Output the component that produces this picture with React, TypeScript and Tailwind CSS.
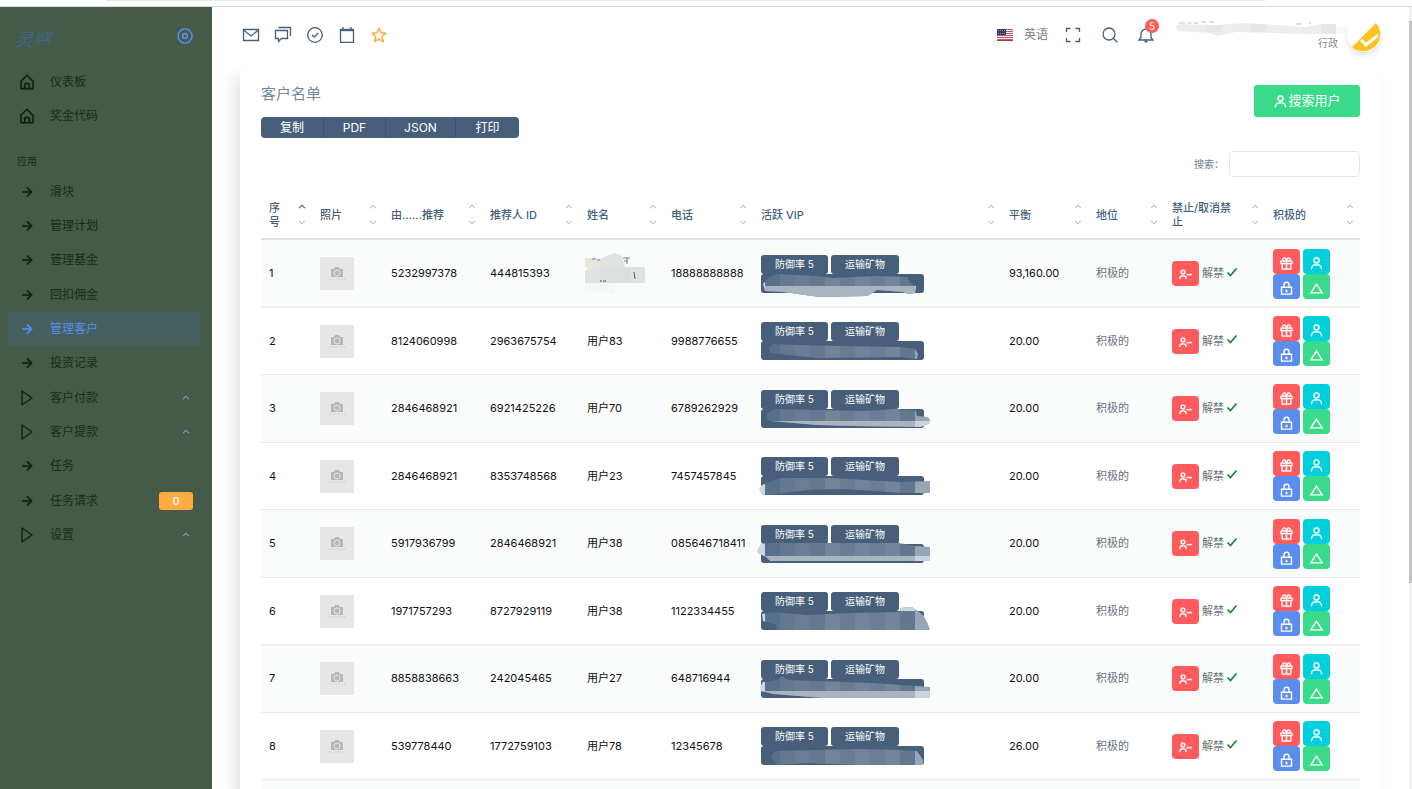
import React from "react";
import {
  BiChevronDown,
  BiChevronUp,
  BiGift,
  BiHomeAlt,
  BiRightArrowAlt,
  BiStar,
  BiUser,
  BiUserMinus,
} from "react-icons/bi";

type MenuItem = {
  label: string;
  icon: "home" | "arrow" | "play";
  active?: boolean;
  sub?: boolean;
  badge?: string;
};

type Customer = {
  id: number;
  referredBy: string;
  referrerId: string;
  name: string;
  phone: string;
  balance: string;
  smudge: string;
  light: number;
};

const mainMenu: MenuItem[] = [
  { label: "仪表板", icon: "home" },
  { label: "奖金代码", icon: "home" },
];

const appMenu: MenuItem[] = [
  { label: "滑块", icon: "arrow" },
  { label: "管理计划", icon: "arrow" },
  { label: "管理基金", icon: "arrow" },
  { label: "回扣佣金", icon: "arrow" },
  { label: "管理客户", icon: "arrow", active: true },
  { label: "投资记录", icon: "arrow" },
  { label: "客户付款", icon: "play", sub: true },
  { label: "客户提款", icon: "play", sub: true },
  { label: "任务", icon: "arrow" },
  { label: "任务请求", icon: "arrow", badge: "0" },
  { label: "设置", icon: "play", sub: true },
];

const columns = [
  { label: "序号", width: "w-[51px]" },
  { label: "照片", width: "w-[71px]" },
  { label: "由......推荐", width: "w-[99px]" },
  { label: "推荐人 ID", width: "w-[97px]" },
  { label: "姓名", width: "w-[84px]" },
  { label: "电话", width: "w-[90px]" },
  { label: "活跃 VIP", width: "w-[248px]" },
  { label: "平衡", width: "w-[87px]" },
  { label: "地位", width: "w-[76px]" },
  { label: "禁止/取消禁止", width: "w-[101px]" },
  { label: "积极的", width: "w-[95px]" },
];

// smudge: outline of the pixelated stroke, light: y where its pale band starts
const customers: Customer[] = [
  {
    id: 1, referredBy: "5232997378", referrerId: "444815393", name: "", phone: "18888888888", balance: "93,160.00",
    smudge: "M13 7 L22 3 L62 5 L78 7 L122 5 L152 6 L155 12 L161 15 L160 22 L153 23 L148 21 L122 19 L112 25 L65 26 L28 21 L10 20 L8 13 Z",
    light: 15,
  },
  {
    id: 2, referredBy: "8124060998", referrerId: "2963675754", name: "用户83", phone: "9988776655", balance: "20.00",
    smudge: "M14 9 L18 6 L45 7 L82 8 L145 9 L160 11 L163 16 L162 21 L145 19 L62 20 L23 16 L15 15 Z",
    light: 30,
  },
  {
    id: 3, referredBy: "2846468921", referrerId: "6921425226", name: "用户70", phone: "6789262929", balance: "20.00",
    smudge: "M12 7 L20 3 L108 5 L142 3 L161 5 L162 10 L173 11 L175 14 L174 18 L165 21 L98 20 L62 19 L15 15 L12 12 Z",
    light: 15,
  },
  {
    id: 4, referredBy: "2846468921", referrerId: "8353748568", name: "用户23", phone: "7457457845", balance: "20.00",
    smudge: "M4 16 L7 12 L25 5 L78 5 L125 8 L145 9 L175 8 L175 20 L145 20 L122 18 L85 16 L52 17 L15 22 L7 22 Z",
    light: 30,
  },
  {
    id: 5, referredBy: "5917936799", referrerId: "2846468921", name: "用户38", phone: "085646718411", balance: "20.00",
    smudge: "M2 9 L6 3 L13 2 L145 2 L160 5 L175 6 L175 20 L15 20 L11 16 L7 14 L3 13 Z",
    light: 15,
  },
  {
    id: 6, referredBy: "1971757293", referrerId: "8727929119", name: "用户38", phone: "1122334455", balance: "20.00",
    smudge: "M7 6 L18 4 L52 7 L95 5 L145 4 L145 0 L157 -1 L168 7 L173 16 L175 22 L22 22 L21 17 L8 13 Z",
    light: 30,
  },
  {
    id: 7, referredBy: "8858838663", referrerId: "242045465", name: "用户27", phone: "648716944", balance: "20.00",
    smudge: "M5 11 L8 6 L22 4 L27 0 L33 4 L118 7 L175 11 L175 22 L68 22 L18 18 L6 15 Z",
    light: 15,
  },
  {
    id: 8, referredBy: "539778440", referrerId: "1772759103", name: "用户78", phone: "12345678", balance: "26.00",
    smudge: "M16 14 L20 8 L102 6 L145 7 L162 8 L168 17 L168 22 L102 22 L52 20 L22 22 Z",
    light: 30,
  },
];

const tiles = [
  "#cfd6dd", "#57708c", "#64788f", "#6a7c96", "#66788f", "#72849a", "#6a7c94",
  "#72849b", "#6b7d97", "#72859b", "#637790", "#98a5b5",
];

// thin line icons on an 18px grid
const LineIcon = ({ d, children }: { d: string; children?: React.ReactNode }) => (
  <svg viewBox="0 0 18 18" className="size-[18px]" fill="none" stroke="currentColor" strokeWidth="1.3">
    <path d={d} />
    {children}
  </svg>
);

const MenuIcon = ({ icon }: { icon: MenuItem["icon"] }) => {
  if (icon === "home") return <BiHomeAlt className="size-[18px]" stroke="currentColor" strokeWidth="0.3" />;
  if (icon === "play")
    return (
      <svg viewBox="0 0 18 18" className="size-[18px]" fill="none" stroke="currentColor" strokeWidth="1.4">
        <path d="M4 2 L14 9 L4 16 Z" strokeLinejoin="round" />
      </svg>
    );
  return <BiRightArrowAlt className="size-[18px]" stroke="currentColor" strokeWidth="0.4" />;
};

const MenuLink = ({ item }: { item: MenuItem }) => (
  <li className="nth-[3n]:mb-px">
    <a
      href="#"
      className={
        item.active
          ? "flex h-[34px] items-center rounded bg-[#446160] pr-[7px] pl-2 text-[#5a8dee]"
          : "flex h-[34px] items-center rounded pr-[7px] pl-2 text-[#15200f]"
      }
    >
      <span className="mr-3 flex w-[22px] justify-center">
        <MenuIcon icon={item.icon} />
      </span>
      <span className={item.active ? "flex-1 text-xs" : "flex-1 text-xs text-[#1c2b1c]"}>{item.label}</span>
      {item.badge && (
        <span className="flex h-[18px] w-[34px] items-center justify-center rounded-[3px] bg-[#fdac41] text-[11px] font-medium text-white">
          {item.badge}
        </span>
      )}
      {item.sub && <BiChevronUp className="size-[14px] text-[#8a99b5]" />}
    </a>
  </li>
);

const Flag = () => (
  <svg viewBox="0 0 16 12" className="h-3 w-4">
    <rect width="16" height="12" fill="#f3eeee" />
    {[0, 2, 4, 6, 8, 10].map((y) => (
      <rect key={y} y={y} width="16" height="1" fill="#c05a63" />
    ))}
    <rect y="11" width="16" height="1" fill="#b9333f" />
    <rect width="9" height="6" fill="#2b3a67" />
    {[1, 3, 5, 7].map((x) => (
      <g key={x} fill="#8e98b8">
        <rect x={x} y="1" width="1" height="1" />
        <rect x={x} y="4" width="1" height="1" />
      </g>
    ))}
  </svg>
);

const Avatar = () => (
  <svg viewBox="0 0 34 34" className="size-[34px] rounded-full bg-white shadow-md">
    <path d="M29 5 A17 17 0 0 1 5 29 Z" fill="#ffc31f" />
    <path d="M14 22 L19 27 L31 17" fill="none" stroke="#fff" strokeWidth="3" />
  </svg>
);

const Photo = () => (
  <svg viewBox="0 0 34 33" className="block h-[33px] w-[34px]">
    <rect width="34" height="33" fill="#e6e6e6" />
    <path d="M11 12 H14 L15 10 H19 L20 12 H23 V20 H11 Z" fill="#b4b8b8" />
    <circle cx="17" cy="16" r="3" fill="#b4b8b8" stroke="#e6e6e6" />
    <path d="M9 22 H26" stroke="#cfcfcf" strokeDasharray="2 1" />
  </svg>
);

const NameSmudge = () => (
  <svg viewBox="0 0 60 42" className="-ml-0.5 block h-[42px] w-[60px]">
    <path d="M0 5 L15 6 L24 2 L30 0 L37 3 L40 14 H60 V30 H0 V18 L4 16 L0 13 Z" fill="#e1e3e2" />
    <path d="M0 5 L15 6 L15 17 L4 17 L0 13 Z" fill="#e5e6dd" />
    <path d="M15 15 H45 V30 H15 Z" fill="#dddee2" />
    <path d="M0 30 H30 V41 L0 38 Z" fill="#f5f6f6" />
    <path d="M7 6 h4 M12 7 h3 M38 5 h7 M39 8 h4 M42 5 v6" stroke="#70819a" />
    <path d="M15 28 h2 M18 28 h3 M49 19 l1 7" stroke="#4b5a6e" />
  </svg>
);

const Smudge = ({ customer }: { customer: Customer }) => {
  const clip = `smudge-${customer.id}`;
  return (
    <svg viewBox="0 0 176 28" className="absolute top-4 -left-1.5 h-7 w-44 overflow-visible">
      <clipPath id={clip}>
        <path d={customer.smudge} />
      </clipPath>
      <g clipPath={`url(#${clip})`}>
        {tiles.map((fill, i) => (
          <rect key={i} x={i * 15 - 5} y="-2" width="15" height="32" fill={fill} />
        ))}
        <rect x="145" y="-2" width="15" height="5" fill="#ccd3dc" />
        <rect x="10" y={customer.light} width="150" height="15" fill="#a9b4c0" />
        <rect x="160" y={customer.light} width="20" height="15" fill="#ccd3dc" />
      </g>
    </svg>
  );
};

const Vip = ({ customer }: { customer: Customer }) => (
  <div className="relative flex w-[172px] flex-wrap gap-x-[3px] text-[10px] text-white">
    <span className="flex h-[19px] w-[67px] items-center justify-center rounded-[3px] bg-[#475f7b]">防御率 5</span>
    <span className="flex h-[19px] w-[68px] items-center justify-center rounded-[3px] bg-[#475f7b]">运输矿物</span>
    <span className="h-[19px] w-[163px] rounded-[3px] bg-[#475f7b]" />
    <Smudge customer={customer} />
  </div>
);

const Actions = () => (
  <div className="flex w-[57px] flex-wrap gap-x-[3px] text-white">
    <button aria-label="礼物" className="flex h-[25px] w-[27px] items-center justify-center rounded bg-[#ff5b5c] pt-1">
      <BiGift className="size-[15px]" stroke="currentColor" strokeWidth="0.4" />
    </button>
    <button aria-label="用户" className="flex h-[25px] w-[27px] items-center justify-center rounded bg-[#00cfdd] pt-1">
      <BiUser className="size-[15px]" stroke="currentColor" strokeWidth="0.4" />
    </button>
    <button aria-label="锁定" className="flex h-[25px] w-[27px] items-center justify-center rounded bg-[#5a8dee] pt-1">
      <svg viewBox="0 0 24 24" className="size-[15px]" fill="none" stroke="currentColor" strokeWidth="2.2">
        <path d="M4 10 H20 V21 H4 Z M8 10 V6 a4 4 0 0 1 8 0 V10" />
        <path d="M12 14 V18" strokeWidth="3" />
      </svg>
    </button>
    <button aria-label="升级" className="flex h-[25px] w-[27px] items-center justify-center rounded bg-[#39da8a] pt-1">
      <svg viewBox="0 0 24 24" className="size-[15px]" fill="none" stroke="currentColor" strokeWidth="2.2">
        <path d="M12 5 L21 19 H3 Z" />
      </svg>
    </button>
  </div>
);

const Sidebar = () => (
  <aside className="w-[212px] shrink-0 bg-[#435b48]">
    <div className="flex h-[58px] items-center justify-between pr-[18px] pl-[15px]">
      <span className="relative pt-2 text-lg leading-6 text-[#47638a] italic">
        灵感
        <span className="absolute right-0 bottom-0 h-2 w-5 bg-[#435b48]" />
      </span>
      <svg viewBox="0 0 18 18" className="size-[18px]" fill="none" stroke="#5a8dee" strokeWidth="1.6">
        <circle cx="9" cy="9" r="7" />
        <circle cx="9" cy="9" r="2.4" />
      </svg>
    </div>
    <nav className="pr-3 pl-2">
      <ul>
        {mainMenu.map((item) => (
          <MenuLink key={item.label} item={item} />
        ))}
      </ul>
      <p className="mt-[18px] mb-1 pl-[9px] text-[10px] leading-5 text-[#1c2b1c]">应用</p>
      <ul>
        {appMenu.map((item) => (
          <MenuLink key={item.label} item={item} />
        ))}
      </ul>
    </nav>
  </aside>
);

const Topbar = () => (
  <header className="flex h-[60px] shrink-0 items-center justify-between pr-7 pb-1 pl-[30px] text-[#475f7b]">
    <div className="flex gap-[14px]">
      <LineIcon d="M1.5 3.5 H16.5 V14.5 H1.5 Z M1.5 4 L9 10 L16.5 4" />
      <LineIcon d="M1.5 4.5 H13.5 V12.5 H7.5 L4.5 15.5 V12.5 H1.5 Z M4.5 1.5 H16.5 V10" />
      <LineIcon d="M6 9 L8.2 11 L12.2 7">
        <circle cx="9" cy="9" r="7.3" />
      </LineIcon>
      <LineIcon d="M2.5 4 H15.5 V16.3 H2.5 Z M5 1 V4 M13 1 V4">
        <path d="M2 4 H16" strokeWidth="2.4" />
      </LineIcon>
      <BiStar className="size-[18px] text-[#fdac41]" />
    </div>
    <div className="flex items-center">
      <Flag />
      <span className="ml-[11px] text-xs text-[#727e8c]">英语</span>
      <div className="ml-4">
        <LineIcon d="M2.5 6 V2.5 H6.5 M11.5 2.5 H15.5 V6 M15.5 12 V15.5 H11.5 M6.5 15.5 H2.5 V12" />
      </div>
      <div className="ml-[19px]">
        <LineIcon d="M12.3 12.3 L16.3 16.3">
          <circle cx="8" cy="8" r="6" />
        </LineIcon>
      </div>
      <div className="relative ml-[18px]">
        <LineIcon d="M2 14 H16 L14 11.5 V8 A5 5 0 0 0 4 8 V11.5 Z">
          <path d="M7.5 15.5 H10.5" strokeWidth="2" />
        </LineIcon>
        <span className="absolute -top-[7px] left-2 flex size-[14px] items-center justify-center rounded-full bg-[#ff5b5c] text-[10px] text-white">
          5
        </span>
      </div>
      <div className="ml-[21px] flex w-[162px] flex-col items-end">
        <svg viewBox="0 0 162 15" className="h-[15px] w-full overflow-visible">
          <path d="M3 1 h6 M12 1 h3 M18 1 h4 M25 0 h5 M33 0 h5 M120 2 h6 M133 1 h2" stroke="#b9c0c8" />
          <path d="M0 5 L4 2 L40 3 L70 1 L100 3 L130 5 L145 2 H160 V12 H128 L100 11 L60 10 L42 14 L32 11 L3 9 Z" fill="#ededef" />
          <path d="M30 3 H45 V10 H30 Z M75 2 H90 V10 H75 Z M145 2 H160 V12 H145 Z" fill="#e6e7e9" />
          <path d="M160 4 L173 6 V10 L160 12 Z" fill="#f7f7f8" />
        </svg>
        <span className="text-[10px] leading-3 text-[#828d99]">行政</span>
      </div>
      <div className="ml-[9px]">
        <Avatar />
      </div>
    </div>
  </header>
);

const CustomerTable = () => (
  <table className="mt-[14px] w-full table-fixed border-separate border-spacing-0">
    <thead>
      <tr className="h-[49px]">
        {columns.map((col, i) => (
          <th
            key={col.label}
            className={`${col.width} border-b-2 border-[#dfe3e7] pl-2 text-left text-[11px] leading-[14px] font-medium text-[#475f7b]`}
          >
            <div className="flex items-center justify-between pr-[3px]">
              <span className={i === 0 ? "w-3" : i === 9 ? "w-[64px]" : "whitespace-nowrap"}>{col.label}</span>
              <span className="flex shrink-0 flex-col gap-px text-[#bcc4cd]">
                <BiChevronUp className={i === 0 ? "size-[14px] text-[#475f7b]" : "size-[14px]"} />
                <BiChevronDown className="size-[14px]" />
              </span>
            </div>
          </th>
        ))}
      </tr>
    </thead>
    <tbody className="text-[11px] text-[#111] [&_td]:border-b [&_td]:border-[#e6e9ec] [&_td]:pl-2">
      {customers.map((customer) => (
        <tr key={customer.id} className="odd:h-[68px] odd:bg-[#fafbfb] even:h-[67px]">
          <td>{customer.id}</td>
          <td>
            <Photo />
          </td>
          <td>{customer.referredBy}</td>
          <td>{customer.referrerId}</td>
          <td>{customer.name || <NameSmudge />}</td>
          <td>{customer.phone}</td>
          <td>
            <Vip customer={customer} />
          </td>
          <td>{customer.balance}</td>
          <td className="text-[#66717f]">积极的</td>
          <td>
            <div className="flex items-center">
              <button
                aria-label="禁止"
                className="flex h-[25px] w-[27px] items-center justify-center rounded bg-[#ff5b5c] pt-0.5 text-white"
              >
                <BiUserMinus className="size-[15px]" stroke="currentColor" strokeWidth="0.4" />
              </button>
              <span className="ml-[3px] text-[#66776f]">解禁</span>
              <svg viewBox="0 0 16 16" className="mb-1 size-4" fill="none" stroke="#118a2b" strokeWidth="1.7">
                <path d="M3.5 8.5 L6.5 11.5 L12.5 4.5" />
              </svg>
            </div>
          </td>
          <td>
            <Actions />
          </td>
        </tr>
      ))}
      <tr className="h-[68px] bg-[#fafbfb]">
        <td colSpan={10} />
        <td>
          <Actions />
        </td>
      </tr>
    </tbody>
  </table>
);

const App = () => {
  return (
    <div className="flex h-screen flex-col overflow-hidden bg-white font-['Inter','Noto_Sans_CJK_SC',sans-serif]">
      <div className="h-[7px] shrink-0 border-b border-[#dcdddf] pr-[147px] pl-[106px]">
        <div className="h-px bg-[#e4e8f4]" />
      </div>
      <div className="flex min-h-0 flex-1">
        <Sidebar />
        <main className="flex min-w-0 flex-1 flex-col">
          <Topbar />
          <section className="mx-7 min-h-0 flex-1 rounded-t bg-white px-[21px] pt-[18px] shadow-[-6px_10px_14px_0_rgba(25,42,70,0.13)]">
            <div className="flex justify-between">
              <div>
                <h4 className="text-[15px] leading-[18px] text-[#7587a0]">客户名单</h4>
                <div className="mt-[14px] flex h-[21px] divide-x divide-[#3c5470] overflow-hidden rounded bg-[#475f7b] text-xs text-white">
                  <button className="w-[63px]">复制</button>
                  <button className="w-[62px]">PDF</button>
                  <button className="w-[70px]">JSON</button>
                  <button className="w-[63px]">打印</button>
                </div>
              </div>
              <button className="flex h-8 w-[106px] items-center justify-center rounded-[3px] bg-[#39da8a] text-[13px] text-white">
                <BiUser className="size-[15px]" stroke="currentColor" strokeWidth="0.4" />
                搜索用户
              </button>
            </div>
            <div className="mt-[13px] flex items-center justify-end">
              <label htmlFor="search" className="mr-[5px] text-[10px] text-[#6b7a8c]">
                搜索：
              </label>
              <input id="search" type="search" className="h-[26px] w-[131px] rounded border border-[#e4e7ea] px-2 text-xs" />
            </div>
            <CustomerTable />
          </section>
        </main>
        <div className="w-[3px] shrink-0 bg-[#f1f1f1] pt-[14px]">
          <div className="h-[562px] bg-[#c1c1c1]" />
        </div>
      </div>
    </div>
  );
};

export default App;
